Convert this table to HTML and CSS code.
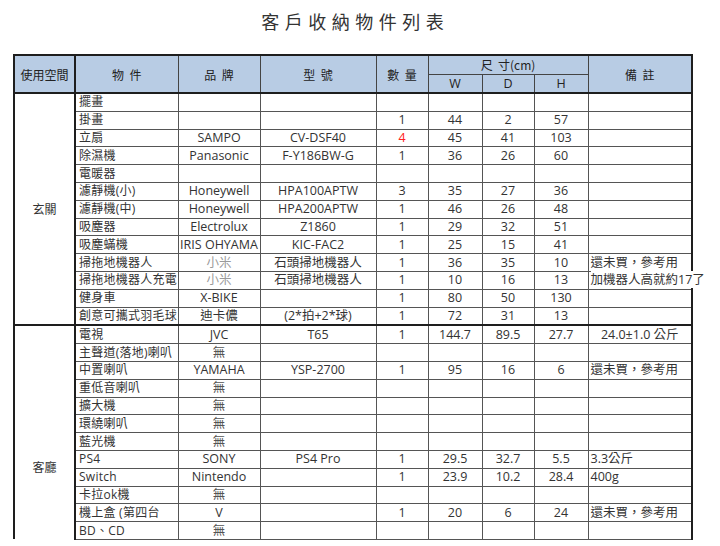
FILE: index.html
```html
<!DOCTYPE html>
<html lang="zh-Hant">
<head>
<meta charset="utf-8">
<title>客戶收納物件列表</title>
<link rel="stylesheet" href="styles.css">
</head>
<body>
<div class="page">
  <h1 class="title">客戶收納物件列表</h1>
  <table class="sheet">
    <colgroup>
      <col class="w-room"><col class="w-item"><col class="w-brand"><col class="w-model"><col class="w-qty"><col class="w-w"><col class="w-d"><col class="w-h"><col class="w-note">
    </colgroup>
    <thead>
      <tr class="hr1">
        <th rowspan="2" class="room">使用空間</th>
        <th rowspan="2">物  件</th>
        <th rowspan="2">品  牌</th>
        <th rowspan="2">型  號</th>
        <th rowspan="2">數  量</th>
        <th colspan="3" class="dim">尺  寸(cm)</th>
        <th rowspan="2">備  註</th>
      </tr>
      <tr class="hr2">
        <th>W</th><th>D</th><th>H</th>
      </tr>
    </thead>
    <tbody>
      <tr><td rowspan="13" class="room mid">玄關</td><td class="item">擺畫</td><td></td><td></td><td></td><td></td><td></td><td></td><td class="note"></td></tr>
      <tr><td class="item">掛畫</td><td></td><td></td><td>1</td><td>44</td><td>2</td><td>57</td><td class="note"></td></tr>
      <tr><td class="item">立扇</td><td>SAMPO</td><td>CV-DSF40</td><td class="red">4</td><td>45</td><td>41</td><td>103</td><td class="note"></td></tr>
      <tr><td class="item">除濕機</td><td>Panasonic</td><td>F-Y186BW-G</td><td>1</td><td>36</td><td>26</td><td>60</td><td class="note"></td></tr>
      <tr><td class="item">電暖器</td><td></td><td></td><td></td><td></td><td></td><td></td><td class="note"></td></tr>
      <tr><td class="item">濾靜機(小)</td><td>Honeywell</td><td>HPA100APTW</td><td>3</td><td>35</td><td>27</td><td>36</td><td class="note"></td></tr>
      <tr><td class="item">濾靜機(中)</td><td>Honeywell</td><td>HPA200APTW</td><td>1</td><td>46</td><td>26</td><td>48</td><td class="note"></td></tr>
      <tr><td class="item">吸塵器</td><td>Electrolux</td><td>Z1860</td><td>1</td><td>29</td><td>32</td><td>51</td><td class="note"></td></tr>
      <tr><td class="item">吸塵蟎機</td><td class="wide"><span class="fit">IRIS OHYAMA</span></td><td>KIC-FAC2</td><td>1</td><td>25</td><td>15</td><td>41</td><td class="note"></td></tr>
      <tr><td class="item">掃拖地機器人</td><td class="soft">小米</td><td>石頭掃地機器人</td><td>1</td><td>36</td><td>35</td><td>10</td><td class="note">還未買，參考用</td></tr>
      <tr><td class="item">掃拖地機器人充電</td><td class="soft">小米</td><td>石頭掃地機器人</td><td>1</td><td>10</td><td>16</td><td>13</td><td class="note"><span class="spill">加機器人高就約17了</span></td></tr>
      <tr><td class="item">健身車</td><td>X-BIKE</td><td></td><td>1</td><td>80</td><td>50</td><td>130</td><td class="note"></td></tr>
      <tr><td class="item">創意可攜式羽毛球</td><td>迪卡儂</td><td>(2*拍+2*球)</td><td>1</td><td>72</td><td>31</td><td>13</td><td class="note"></td></tr>
      <tr class="section"><td rowspan="12" class="room low">客廳</td><td class="item">電視</td><td>JVC</td><td>T65</td><td>1</td><td>144.7</td><td>89.5</td><td>27.7</td><td>24.0±1.0 公斤</td></tr>
      <tr><td class="item">主聲道(落地)喇叭</td><td class="none">無</td><td></td><td></td><td></td><td></td><td></td><td class="note"></td></tr>
      <tr><td class="item">中置喇叭</td><td>YAMAHA</td><td>YSP-2700</td><td>1</td><td>95</td><td>16</td><td>6</td><td class="note">還未買，參考用</td></tr>
      <tr><td class="item">重低音喇叭</td><td class="none">無</td><td></td><td></td><td></td><td></td><td></td><td class="note"></td></tr>
      <tr><td class="item">擴大機</td><td class="none">無</td><td></td><td></td><td></td><td></td><td></td><td class="note"></td></tr>
      <tr><td class="item">環繞喇叭</td><td class="none">無</td><td></td><td></td><td></td><td></td><td></td><td class="note"></td></tr>
      <tr><td class="item">藍光機</td><td class="none">無</td><td></td><td></td><td></td><td></td><td></td><td class="note"></td></tr>
      <tr><td class="item">PS4</td><td>SONY</td><td>PS4 Pro</td><td>1</td><td>29.5</td><td>32.7</td><td>5.5</td><td class="note">3.3公斤</td></tr>
      <tr><td class="item">Switch</td><td>Nintendo</td><td></td><td>1</td><td>23.9</td><td>10.2</td><td>28.4</td><td class="note">400g</td></tr>
      <tr><td class="item">卡拉ok機</td><td class="none">無</td><td></td><td></td><td></td><td></td><td></td><td class="note"></td></tr>
      <tr><td class="item">機上盒 (第四台</td><td>V</td><td></td><td>1</td><td>20</td><td>6</td><td>24</td><td class="note">還未買，參考用</td></tr>
      <tr class="lastrow"><td class="item">BD、CD</td><td class="none">無</td><td></td><td></td><td></td><td></td><td></td><td class="note"></td></tr>
    </tbody>
  </table>
</div>
</body>
</html>
```

FILE: styles.css
```css
html, body {
  margin: 0;
  padding: 0;
  background: #ffffff;
}

body {
  font-family: "Open Sans", "Noto Sans CJK TC", sans-serif;
  color: #333333;
}

.page {
  width: 679px;
  padding: 9px 0 0 13px;
}

.title {
  margin: 0 0 21px 0;
  font-family: "Noto Sans CJK TC", sans-serif;
  font-weight: 400;
  font-size: 18px;
  line-height: 24px;
  letter-spacing: 5.5px;
  text-indent: 5.5px;
  text-align: center;
  color: #333333;
}

.sheet {
  width: 678px;
  table-layout: fixed;
  border-collapse: collapse;
  border: 2px solid #1e1e1e;
  border-bottom-style: none;
  font-size: 12.5px;
  line-height: 16px;
}

.w-room { width: 61px; }
.w-item { width: 103px; }
.w-brand { width: 82px; }
.w-model { width: 116px; }
.w-qty { width: 52px; }
.w-w { width: 54px; }
.w-d { width: 52px; }
.w-h { width: 54px; }
.w-note { width: 104px; }

.sheet th {
  background: #b8cce4;
  font-family: "Noto Sans CJK TC", sans-serif;
  font-weight: 400;
  font-size: 12px;
  line-height: 15px;
  color: #222222;
  white-space: pre;
  border: 1px solid #444444;
  border-bottom: 2px solid #1e1e1e;
  padding: 0;
  height: 17px;
  vertical-align: middle;
}

.sheet .hr1 {
  height: 19px;
}

.sheet .hr2 {
  height: 19px;
}

.sheet th.dim {
  border-bottom: 1px solid #444444;
}

.sheet .hr2 th {
  font-family: "Open Sans", sans-serif;
  font-size: 12.5px;
}

.sheet td {
  border: 1px solid #555555;
  padding: 0 2px;
  height: 16.8px;
  text-align: center;
  vertical-align: middle;
  white-space: nowrap;
  overflow: hidden;
}

.sheet tbody tr {
  height: 17.8px;
}

.sheet th.room,
.sheet td.room {
  border-right: 2px solid #1e1e1e;
}

.sheet td.room {
  font-family: "Noto Sans CJK TC", sans-serif;
  font-size: 12px;
  color: #333333;
}

.sheet td.mid {
  vertical-align: middle;
}

.sheet td.low {
  vertical-align: top;
  padding-top: 133px;
  border-bottom-style: none;
}

.sheet .section td {
  border-top: 2px solid #1e1e1e;
}

.sheet td.item {
  text-align: left;
  padding-left: 3px;
  padding-right: 0;
  font-size: 12px;
  letter-spacing: 0.25px;
}

.sheet td.note {
  text-align: left;
  padding-left: 2px;
  overflow: visible;
}

.sheet td.wide {
  padding: 0;
}

.fit {
  display: flex;
  justify-content: center;
}

.spill {
  position: relative;
  background: #ffffff;
}

.red {
  color: #ff2020;
}

.soft {
  color: #9a9a9a;
}

.none {
  color: #555555;
}
```
